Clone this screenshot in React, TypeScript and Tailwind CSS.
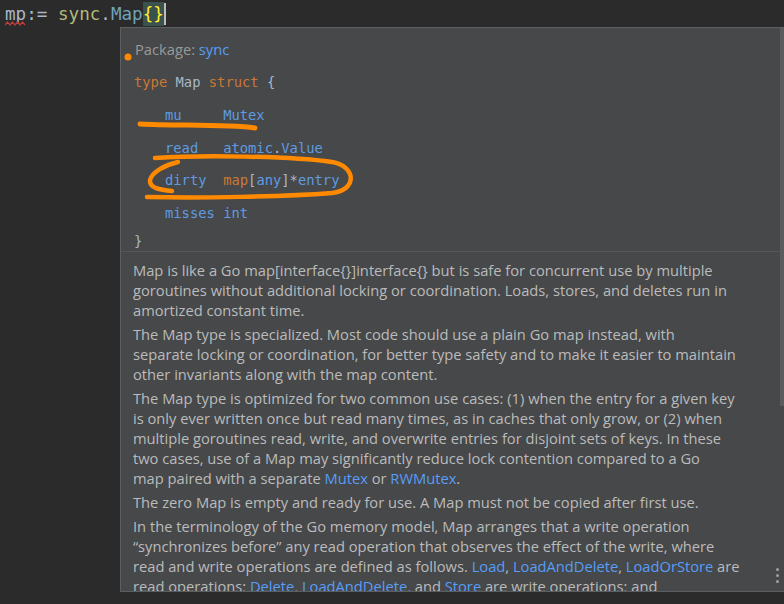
import React from "react";

const mono = { fontFamily: '"DejaVu Sans Mono", "Liberation Mono", monospace' };
const sans = { fontFamily: '"Open Sans", "Noto Sans", sans-serif' };

function L({ children }: { children: React.ReactNode }) {
  return <span className="text-[#589df6]">{children}</span>;
}

export default function App() {
  return (
    <div className="relative h-[604px] w-[784px] overflow-hidden bg-[#2b2b2b]">
      {/* editor line */}
      <div className="relative flex h-[28px] items-center pl-[5px] text-[17.6px] text-[#a9b7c6]" style={mono}>
        <span className="relative">
          mp
          <svg className="absolute left-0 top-[20px]" width="21" height="5" viewBox="0 0 21 5">
            <path d="M0 4 L2.5 1 L5 4 L7.5 1 L10 4 L12.5 1 L15 4 L17.5 1 L20 4" fill="none" stroke="#bc3f3c" strokeWidth="1.2" />
          </svg>
        </span>
        <span>:=&nbsp;</span>
        <span className="text-[#b4b97f]">sync</span>
        <span>.</span>
        <span className="text-[#6fa3b8]">Map</span>
        <span className="flex h-[24px] items-center bg-[#3b514d] text-[#ffef28]">{"{}"}</span>
        <span className="h-[22px] w-[2px] bg-[#bbbbbb]" />
      </div>

      {/* documentation popup */}
      <div className="absolute left-[120px] top-[27px] h-[565px] w-[664px] overflow-hidden border-b border-l border-t border-[#5c5f61] bg-[#46484a]">
        <div className="pl-[13px]">
          <div className="mt-[11px] h-[20px] pl-[1px] text-[14.7px] leading-[20px]" style={sans}>
            <span className="text-[#999999]">Package: </span>
            <span className="text-[#589df6]">sync</span>
          </div>
          <div className="mt-[7px] text-[13.8px] leading-[32.75px] text-[#a9b7c6]" style={mono}>
            <div className="whitespace-pre">
              <span className="text-[#cc7832]">type</span> Map <span className="text-[#cc7832]">struct</span> {"{"}
            </div>
            <div className="whitespace-pre pl-[31px] text-[#5f9be0]">
              mu     Mutex
            </div>
            <div className="whitespace-pre pl-[31px] text-[#5f9be0]">
              read   atomic<span className="text-[#a9b7c6]">.</span>Value
            </div>
            <div className="whitespace-pre pl-[31px] text-[#5f9be0]">
              dirty  <span className="text-[#cc7832]">map</span>
              <span className="text-[#a9b7c6]">[</span>any<span className="text-[#a9b7c6]">]*</span>entry
            </div>
            <div className="whitespace-pre pl-[31px] text-[#5f9be0]">
              misses int
            </div>
            <div className="h-[21px] pt-[1px] leading-[20px] text-[#a9b7c6]">{"}"}</div>
          </div>
        </div>
        <div className="whitespace-nowrap border-t border-[#55585a] pl-[12px] pt-[8px] text-[14.7px] leading-[20px] text-[#bbbbbb]" style={sans}>
          <p className="mb-[4px]">
            Map is like a Go map[interface{"{}"}]interface{"{}"} but is safe for concurrent use by multiple<br />
            goroutines without additional locking or coordination. Loads, stores, and deletes run in<br />
            amortized constant time.
          </p>
          <p className="mb-[4px]">
            The Map type is specialized. Most code should use a plain Go map instead, with<br />
            separate locking or coordination, for better type safety and to make it easier to maintain<br />
            other invariants along with the map content.
          </p>
          <p className="mb-[4px]">
            The Map type is optimized for two common use cases: (1) when the entry for a given key<br />
            is only ever written once but read many times, as in caches that only grow, or (2) when<br />
            multiple goroutines read, write, and overwrite entries for disjoint sets of keys. In these<br />
            two cases, use of a Map may significantly reduce lock contention compared to a Go<br />
            map paired with a separate <L>Mutex</L> or <L>RWMutex</L>.
          </p>
          <p className="mb-[4px]">
            The zero Map is empty and ready for use. A Map must not be copied after first use.
          </p>
          <p className="mb-[4px]">
            In the terminology of the Go memory model, Map arranges that a write operation<br />
            “synchronizes before” any read operation that observes the effect of the write, where<br />
            read and write operations are defined as follows. <L>Load</L>, <L>LoadAndDelete</L>, <L>LoadOrStore</L> are<br />
            read operations; <L>Delete</L>, <L>LoadAndDelete</L>, and <L>Store</L> are write operations; and
          </p>
        </div>
        {/* scrollbar */}
        <div className="absolute right-0 top-0 h-[378px] w-[4px] bg-[#5a5d5f]" />
        {/* more icon */}
        <div className="absolute bottom-[8px] right-[5px] flex flex-col gap-[3px]">
          <span className="h-[3px] w-[3px] rounded-full bg-[#a0a0a0]" />
          <span className="h-[3px] w-[3px] rounded-full bg-[#a0a0a0]" />
          <span className="h-[3px] w-[3px] rounded-full bg-[#a0a0a0]" />
        </div>
      </div>

      {/* hand-drawn annotations */}
      <svg className="pointer-events-none absolute left-0 top-0" width="784" height="604">
        <circle cx="128" cy="57" r="3.5" fill="#ff8a00" />
        <path d="M140 124 C 175 126, 225 124, 255 128" fill="none" stroke="#ff8a00" strokeWidth="5" strokeLinecap="round" />
        <path d="M155 158 C 200 155, 290 156, 332 162 C 356 166, 358 190, 332 193 C 280 197, 200 198, 147 197" fill="none" stroke="#ff8a00" strokeWidth="4.5" strokeLinecap="round" />
        <path d="M178 162 C 165 165, 152 172, 150 180 C 149 188, 160 190, 172 191" fill="none" stroke="#ff8a00" strokeWidth="4.5" strokeLinecap="round" />
      </svg>
    </div>
  );
}
